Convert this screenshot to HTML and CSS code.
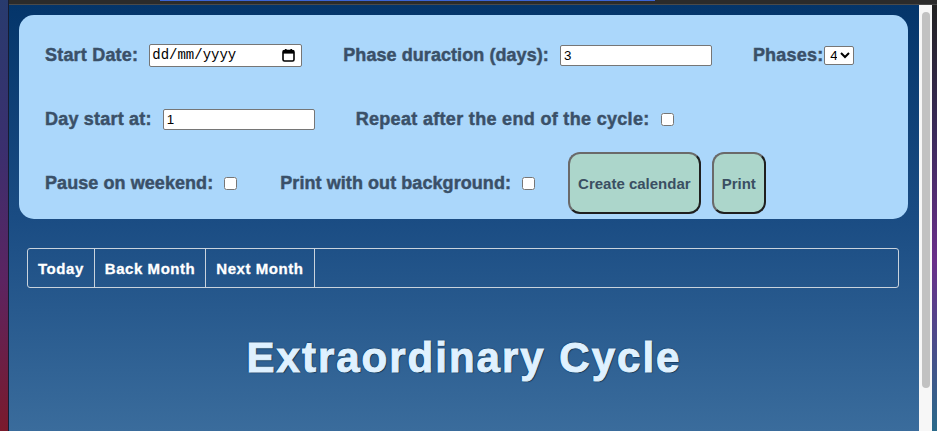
FILE: index.html
```html
<!DOCTYPE html>
<html lang="en-GB">
<head>
<meta charset="utf-8">
<title>Extraordinary Cycle</title>
<link rel="stylesheet" href="styles.css">
</head>
<body>
<div class="desk desk-left"></div>
<div class="window">
  <div class="chrome"><div class="chrome-tab"></div></div>
  <div class="viewport">
    <main class="page">
      <section class="panel">
        <div class="row">
          <label class="group"><span class="lbl">Start Date:</span>
            <span class="date-box">
              <input class="date-text" type="text" placeholder="dd/mm/yyyy">
              <svg class="cal" width="13" height="13" viewBox="0 0 13 13" aria-hidden="true">
                <rect x="1" y="1.5" width="11" height="10.5" rx="1.5" fill="none" stroke="#000" stroke-width="1.6"/>
                <rect x="1" y="2" width="11" height="2.6" fill="#000"/>
                <rect x="3" y="0" width="1.6" height="2.5" fill="#000"/>
                <rect x="8.4" y="0" width="1.6" height="2.5" fill="#000"/>
              </svg>
            </span>
          </label>
          <label class="group"><span class="lbl lbl-tight">Phase duraction (days):</span><input class="inp" type="text" value="3"></label>
          <label class="group tight"><span class="lbl">Phases:</span><select class="sel"><option>1</option><option>2</option><option>3</option><option selected>4</option></select></label>
        </div>
        <div class="row">
          <label class="group"><span class="lbl">Day start at:</span><input class="inp" type="text" value="1"></label>
          <label class="group"><span class="lbl lbl-wide">Repeat after the end of the cycle:</span><input class="chk" type="checkbox"></label>
        </div>
        <div class="row row-last">
          <label class="group"><span class="lbl lbl-tight">Pause on weekend:</span><input class="chk" type="checkbox"></label>
          <label class="group"><span class="lbl lbl-tight">Print with out background:</span><input class="chk" type="checkbox"></label>
          <div class="buttons">
            <button class="btn" type="button">Create calendar</button>
            <button class="btn" type="button">Print</button>
          </div>
        </div>
      </section>
      <nav class="nav">
        <a class="nav-item">Today</a>
        <a class="nav-item">Back Month</a>
        <a class="nav-item">Next Month</a>
      </nav>
      <h1 class="title">Extraordinary Cycle</h1>
    </main>
    <div class="scrollbar"><div class="thumb"></div></div>
    <div class="desk desk-right"></div>
  </div>
</div>
</body>
</html>
```
FILE: styles.css
```css
html, body {
  margin: 0;
  padding: 0;
  height: 431px;
  overflow: hidden;
}
body {
  display: flex;
  font-family: "Liberation Sans", Arial, sans-serif;
  background: #1c1c1c;
}
.desk {
  flex: none;
  background: linear-gradient(180deg, #283b6e 0%, #3b2f6e 35%, #5c2461 65%, #7a1a2c 100%);
}
.desk-left {
  width: 8px;
  border-right: 1px solid #151d33;
}
.desk-right {
  width: 5px;
  background: linear-gradient(180deg, #222 0%, #3a2a5a 30%, #6a2f8a 60%, #2a6a8a 100%);
}
.window {
  flex: 1;
  display: flex;
  flex-direction: column;
  min-width: 0;
}
.chrome {
  height: 4px;
  background: #2b2b2b;
  border-bottom: 1px solid #4a4a4a;
}
.chrome-tab {
  margin-left: 151px;
  width: 495px;
  height: 1px;
  background: #3d66d6;
}
.viewport {
  flex: 1;
  display: flex;
  min-height: 0;
}
.page {
  flex: 1;
  min-width: 0;
  background: linear-gradient(180deg, #04356a 0%, #1a4c83 50%, #3a6c9c 100%);
  display: flex;
  flex-direction: column;
}
.scrollbar {
  width: 13px;
  flex: none;
  background: #f7f7f7;
  padding: 7px 2px 0 3px;
  box-sizing: border-box;
}
.thumb {
  width: 8px;
  height: 376px;
  border-radius: 4px;
  background: #c2c2c2;
}

/* panel */
.panel {
  margin: 10px 11px 0 10px;
  background: #abd7fb;
  border-radius: 15px;
  padding: 8px 0 4px 26px;
  display: flex;
  flex-direction: column;
}
.row {
  height: 64px;
  display: flex;
  align-items: center;
  gap: 41px;
}
.row-last {
  gap: 43px;
}
.group {
  display: flex;
  align-items: center;
  gap: 11px;
}
.group.tight {
  gap: 1px;
}
.lbl {
  font-size: 18px;
  font-weight: bold;
  letter-spacing: 0.2px;
  color: #3a5068;
  -webkit-text-stroke: 0.45px #3a5068;
  white-space: nowrap;
}
.lbl-tight {
  letter-spacing: 0.07px;
}
.lbl-wide {
  letter-spacing: 0.32px;
}
.inp {
  box-sizing: border-box;
  width: 152px;
  height: 21px;
  margin: 0;
  padding: 1px 3px;
  border: 1px solid #767676;
  border-radius: 2px;
  background: #fff;
  font-family: "Liberation Sans", Arial, sans-serif;
  font-size: 13.33px;
  color: #000;
}
.date-box {
  box-sizing: border-box;
  width: 153px;
  height: 23px;
  display: flex;
  align-items: center;
  padding: 0 6px 0 2px;
  border: 1px solid #767676;
  border-radius: 2px;
  background: #fff;
}
.date-text {
  flex: 1;
  min-width: 0;
  border: 0;
  padding: 0;
  margin: 0;
  outline: none;
  background: transparent;
  font-family: "Liberation Mono", "Courier New", monospace;
  font-size: 14px;
  color: #000;
}
.date-text::placeholder {
  color: #000;
  opacity: 1;
}
.cal {
  flex: none;
  display: block;
}
.sel {
  box-sizing: border-box;
  width: 30px;
  height: 19px;
  margin: 0;
  padding: 0 0 0 1px;
  border: 1px solid #767676;
  border-radius: 2px;
  background: #fff;
  font-family: "Liberation Sans", Arial, sans-serif;
  font-size: 13.33px;
  color: #000;
}
.chk {
  width: 13px;
  height: 13px;
  margin: 0;
}
.buttons {
  display: flex;
  gap: 11px;
  margin-left: -10px;
}
.btn {
  height: 62px;
  padding: 0 8px;
  border: 2px solid #6a6a6a;
  border-right-color: #1f1f1f;
  border-bottom-color: #1f1f1f;
  border-radius: 12px;
  background: #acd6cb;
  color: #3a4f62;
  font-family: "Liberation Sans", Arial, sans-serif;
  font-size: 15px;
  font-weight: bold;
}

/* nav */
.nav {
  margin: 29px 20px 0 18px;
  height: 40px;
  box-sizing: border-box;
  border: 1px solid #c9d3dd;
  border-radius: 3px;
  display: flex;
}
.nav-item {
  display: flex;
  align-items: center;
  padding: 0 10px;
  border-right: 1px solid #c9d3dd;
  color: #fff;
  font-size: 15px;
  font-weight: bold;
  letter-spacing: 0.55px;
  -webkit-text-stroke: 0.3px #fff;
  text-decoration: none;
}

/* title */
.title {
  margin: 46px 0 0;
  text-align: center;
  font-size: 42px;
  line-height: 48px;
  font-weight: bold;
  letter-spacing: 2px;
  color: #dff1ff;
  -webkit-text-stroke: 1px #dff1ff;
  text-shadow: 1px 1px 1px #0b2745, -1px 0 1px #163a60, 0 -1px 1px #163a60;
}
```
